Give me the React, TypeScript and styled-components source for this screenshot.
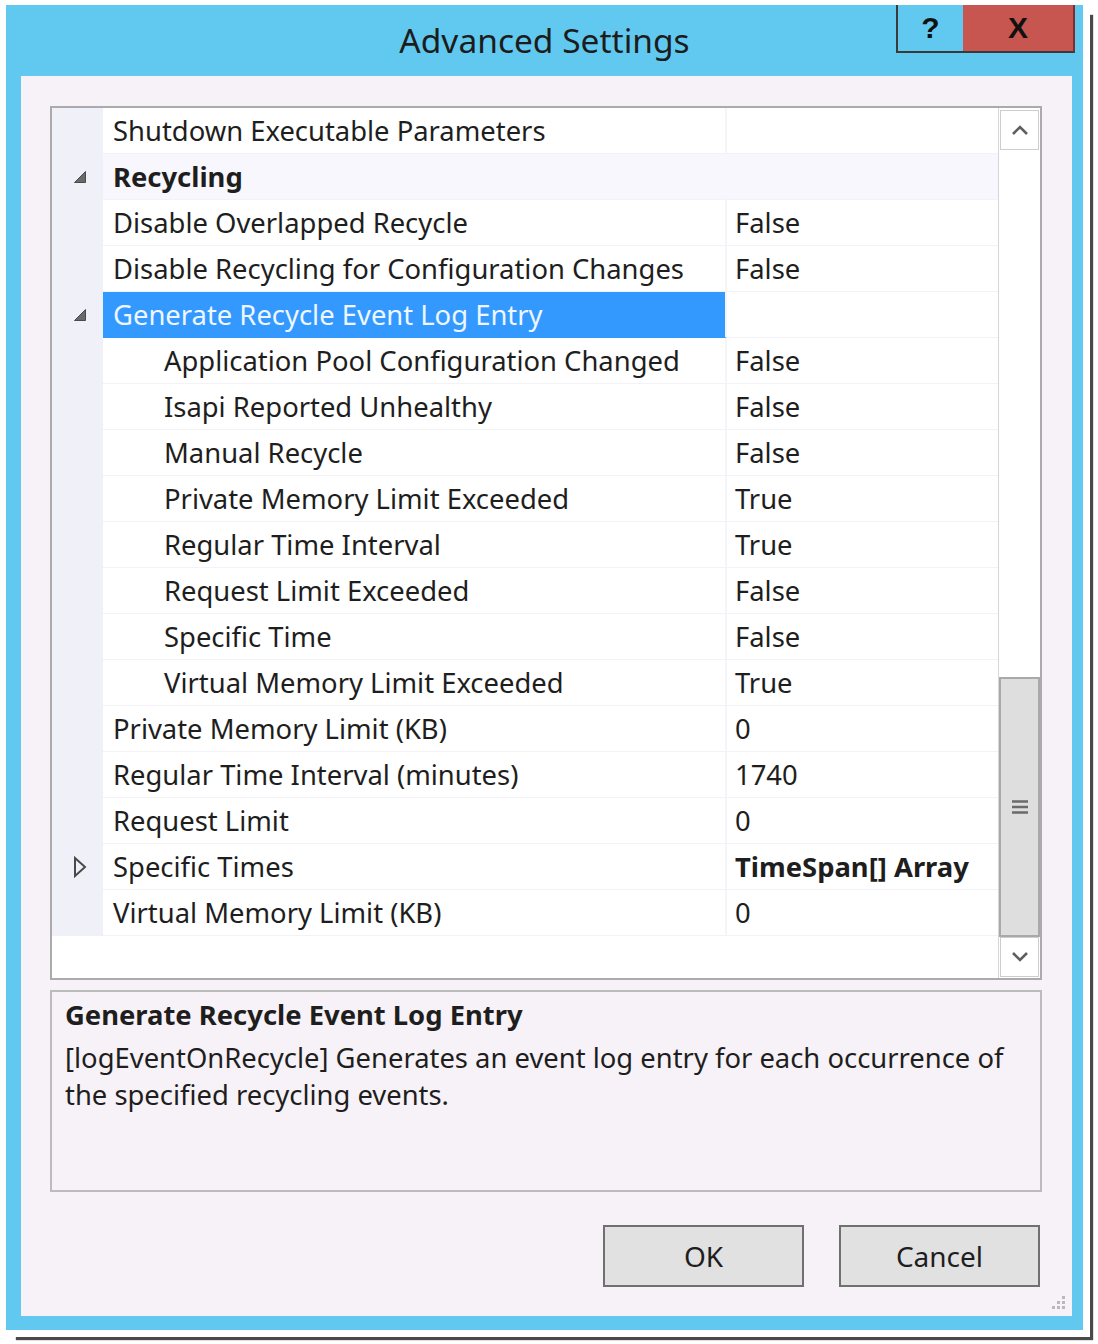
import styled, { createGlobalStyle } from 'styled-components'

const GlobalStyle = createGlobalStyle`
  html, body {
    margin: 0;
    padding: 0;
    background: #ffffff;
  }
  body {
    font-family: "Noto Sans", "Open Sans", sans-serif;
    color: #1e1e1e;
  }
`

// ─── 窗口外框 ───
const Page = styled.div`
  width: 1098px;
  height: 1344px;
  padding: 5px 0 0 6px;
  box-sizing: border-box;
`

const Window = styled.div`
  width: 1077px;
  height: 1325px;
  background: #61c9ef;
  display: flex;
  flex-direction: column;
  padding: 0 11px 14px 15px;
  box-sizing: border-box;
  box-shadow: 7px 7px 0 0 #ffffff, 10px 10px 1px 0 #4a4a4a;
`

const TitleBar = styled.div`
  height: 71px;
  display: grid;
  grid-template-columns: 1fr auto 1fr;
  margin: 0 -11px 0 -15px;
`

const Title = styled.div`
  grid-column: 2;
  align-self: center;
  font-size: 33.5px;
  color: #1c1c1c;
  padding-bottom: 1px;
`

const CaptionButtons = styled.div`
  grid-column: 3;
  justify-self: end;
  display: flex;
  height: 48px;
  margin-right: 8px;
`

const CaptionBtn = styled.div<{ $close?: boolean }>`
  width: ${p => (p.$close ? '112px' : '67px')};
  height: 100%;
  box-sizing: border-box;
  display: flex;
  align-items: center;
  justify-content: center;
  background: ${p => (p.$close ? '#c75650' : '#61c9ef')};
  border-bottom: 2px solid #3a3a3a;
  border-left: ${p => (p.$close ? 'none' : '2px solid #3a3a3a')};
  border-right: ${p => (p.$close ? '2px solid #7a3030' : 'none')};
  font-family: "Liberation Sans", Arial, sans-serif;
  font-weight: 700;
  font-size: 30px;
  color: #111;
`

// ─── 客户区 ───
const Client = styled.div`
  flex: 1;
  position: relative;
  background: #f7f2f7;
  display: flex;
  flex-direction: column;
  padding: 30px 30px 0 29px;
`

// ─── 属性网格 ───
const PropertyGrid = styled.div`
  height: 874px;
  box-sizing: border-box;
  border: 2px solid #ababab;
  background: #ffffff;
  display: flex;
`

const Rows = styled.div`
  flex: 1;
  display: flex;
  flex-direction: column;
`

const Row = styled.div`
  height: 46px;
  display: grid;
  grid-template-columns: 51px 624px 1fr;
  font-size: 27.4px;
`

const Gutter = styled.div`
  background: #f0f0f9;
  display: flex;
  align-items: center;
  justify-content: center;
  padding-left: 4px;
`

const NameCell = styled.div<{ $indent?: boolean; $selected?: boolean; $category?: boolean }>`
  display: flex;
  align-items: center;
  box-sizing: border-box;
  padding-left: ${p => (p.$indent ? '61px' : '10px')};
  border-right: 2px solid ${p => (p.$category ? '#f7f7fd' : '#f4f4f9')};
  border-bottom: 1px solid ${p => (p.$selected ? '#3399ff' : '#f2f2f8')};
  background: ${p => (p.$selected ? '#3399ff' : p.$category ? '#f7f7fd' : '#ffffff')};
  color: ${p => (p.$selected ? '#eef6ff' : '#1e1e1e')};
  font-weight: ${p => (p.$category ? 700 : 400)};
  white-space: nowrap;
`

const ValueCell = styled.div<{ $bold?: boolean; $category?: boolean }>`
  display: flex;
  align-items: center;
  padding-left: 8px;
  border-bottom: 1px solid #f2f2f8;
  background: ${p => (p.$category ? '#f7f7fd' : '#ffffff')};
  font-weight: ${p => (p.$bold ? 700 : 400)};
  white-space: nowrap;
`

// ─── 滚动条 ───
const ScrollBar = styled.div`
  width: 42px;
  box-sizing: border-box;
  border-left: 1px solid #d6d6d6;
  display: flex;
  flex-direction: column;
  padding: 2px 0 1px;
`

const ScrollBtn = styled.div`
  height: 40px;
  box-sizing: border-box;
  border: 1px solid #cdcdcd;
  margin: 0 1px;
  display: flex;
  align-items: center;
  justify-content: center;
  background: #ffffff;
`

const Track = styled.div`
  flex: 1;
`

const Thumb = styled.div`
  height: 260px;
  box-sizing: border-box;
  border: 2px solid #a9a9a9;
  background: #dedede;
  display: flex;
  align-items: center;
  justify-content: center;
`

// ─── 描述区 ───
const Description = styled.div`
  height: 202px;
  box-sizing: border-box;
  margin-top: 10px;
  border: 2px solid #bcbcbc;
  padding: 4px 20px 0 13px;
  font-size: 27.4px;
  line-height: 37px;
`

const DescTitle = styled.div`
  font-weight: 700;
  margin-bottom: 6px;
`

// ─── 按钮 ───
const ButtonRow = styled.div`
  display: flex;
  justify-content: flex-end;
  gap: 35px;
  margin-top: 33px;
  padding-right: 2px;
`

const DialogBtn = styled.div`
  width: 201px;
  height: 62px;
  box-sizing: border-box;
  border: 2px solid #707070;
  background: #e1e1e1;
  display: flex;
  align-items: center;
  justify-content: center;
  font-size: 28px;
  color: #1e1e1e;
`

const Grip = styled.svg`
  position: absolute;
  right: 6px;
  bottom: 4px;
`

type Item = {
  name: string
  value?: string
  indent?: boolean
  expander?: 'open' | 'closed'
  category?: boolean
  selected?: boolean
  boldValue?: boolean
}

const items: Item[] = [
  { name: 'Shutdown Executable Parameters', value: '' },
  { name: 'Recycling', expander: 'open', category: true },
  { name: 'Disable Overlapped Recycle', value: 'False' },
  { name: 'Disable Recycling for Configuration Changes', value: 'False' },
  { name: 'Generate Recycle Event Log Entry', expander: 'open', selected: true },
  { name: 'Application Pool Configuration Changed', value: 'False', indent: true },
  { name: 'Isapi Reported Unhealthy', value: 'False', indent: true },
  { name: 'Manual Recycle', value: 'False', indent: true },
  { name: 'Private Memory Limit Exceeded', value: 'True', indent: true },
  { name: 'Regular Time Interval', value: 'True', indent: true },
  { name: 'Request Limit Exceeded', value: 'False', indent: true },
  { name: 'Specific Time', value: 'False', indent: true },
  { name: 'Virtual Memory Limit Exceeded', value: 'True', indent: true },
  { name: 'Private Memory Limit (KB)', value: '0' },
  { name: 'Regular Time Interval (minutes)', value: '1740' },
  { name: 'Request Limit', value: '0' },
  { name: 'Specific Times', value: 'TimeSpan[] Array', expander: 'closed', boldValue: true },
  { name: 'Virtual Memory Limit (KB)', value: '0' },
]

const OpenGlyph = () => (
  <svg width="14" height="14" viewBox="0 0 14 14">
    <path d="M12.5 1.5 L12.5 12.5 L1.5 12.5 Z" fill="#6a6a6a" stroke="#4a4a4a" strokeWidth="1" />
  </svg>
)

const ClosedGlyph = () => (
  <svg width="14" height="22" viewBox="0 0 14 22">
    <path d="M2 2 L12 11 L2 20 Z" fill="none" stroke="#4a4a4a" strokeWidth="2" strokeLinejoin="miter" />
  </svg>
)

const Chevron = ({ up }: { up?: boolean }) => (
  <svg width="18" height="12" viewBox="0 0 18 12">
    <path
      d={up ? 'M2 10 L9 3 L16 10' : 'M2 2 L9 9 L16 2'}
      fill="none"
      stroke="#5f5f5f"
      strokeWidth="2.6"
    />
  </svg>
)

export default function App() {
  return (
    <Page>
      <GlobalStyle />
      <Window>
        <TitleBar>
          <Title>Advanced Settings</Title>
          <CaptionButtons>
            <CaptionBtn>?</CaptionBtn>
            <CaptionBtn $close>X</CaptionBtn>
          </CaptionButtons>
        </TitleBar>

        <Client>
          <PropertyGrid>
            <Rows>
              {items.map(it => (
                <Row key={it.name}>
                  <Gutter>
                    {it.expander === 'open' && <OpenGlyph />}
                    {it.expander === 'closed' && <ClosedGlyph />}
                  </Gutter>
                  <NameCell $indent={it.indent} $selected={it.selected} $category={it.category}>
                    {it.name}
                  </NameCell>
                  <ValueCell $bold={it.boldValue} $category={it.category}>
                    {it.value}
                  </ValueCell>
                </Row>
              ))}
            </Rows>
            <ScrollBar>
              <ScrollBtn>
                <Chevron up />
              </ScrollBtn>
              <Track />
              <Thumb>
                <svg width="18" height="16" viewBox="0 0 18 16">
                  <path d="M1 2.5 H17 M1 8 H17 M1 13.5 H17" stroke="#6a6a6a" strokeWidth="2.6" />
                </svg>
              </Thumb>
              <ScrollBtn>
                <Chevron />
              </ScrollBtn>
            </ScrollBar>
          </PropertyGrid>

          <Description>
            <DescTitle>Generate Recycle Event Log Entry</DescTitle>
            <div>
              [logEventOnRecycle] Generates an event log entry for each occurrence of the specified
              recycling events.
            </div>
          </Description>

          <ButtonRow>
            <DialogBtn>OK</DialogBtn>
            <DialogBtn>Cancel</DialogBtn>
          </ButtonRow>

          <Grip width="18" height="18" viewBox="0 0 18 18">
            <g fill="#b9b9b9">
              <rect x="14" y="2" width="3" height="3" />
              <rect x="9" y="7" width="3" height="3" />
              <rect x="14" y="7" width="3" height="3" />
              <rect x="4" y="12" width="3" height="3" />
              <rect x="9" y="12" width="3" height="3" />
              <rect x="14" y="12" width="3" height="3" />
            </g>
          </Grip>
        </Client>
      </Window>
    </Page>
  )
}
